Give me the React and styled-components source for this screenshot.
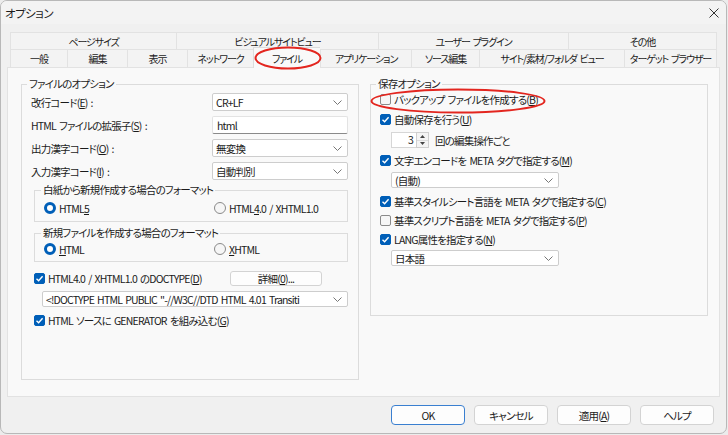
import React from 'react';
import styled, { createGlobalStyle } from 'styled-components';

const GlobalStyle = createGlobalStyle`
  html, body {
    margin: 0;
    padding: 0;
    background: #ececec;
  }
  body {
    font-family: "Noto Sans CJK JP", "Noto Sans", sans-serif;
    font-size: 10.5px;
    letter-spacing: -0.8px;
    word-spacing: 1.5px;
    color: #1b1b1b;
    font-feature-settings: "palt";
  }
  * {
    box-sizing: border-box;
  }
  u {
    text-underline-offset: 1px;
  }
`;

const Window = styled.div`
  position: relative;
  width: 727px;
  height: 434px;
  background: #f0f0f0;
  border: 1px solid #b8b8b8;
  border-radius: 7px;
  display: flex;
  flex-direction: column;
  overflow: hidden;
`;

const TitleBar = styled.div`
  height: 23px;
  display: flex;
  align-items: center;
  justify-content: space-between;
  padding: 0 7px 0 4px;
  font-size: 11.5px;
  letter-spacing: -0.5px;
  background: #f3f3f3;
`;

const Body = styled.div`
  padding: 8px 6px 0 6px;
  display: flex;
  flex-direction: column;
`;

const Tabs = styled.div`
  margin: 0 2px 0 3px;
  display: flex;
  flex-direction: column;
`;

const TabRow = styled.div`
  display: flex;
  height: ${(p) => p.$h}px;
`;

const Tab = styled.div`
  flex: 0 0 ${(p) => p.$w}px;
  display: flex;
  align-items: center;
  justify-content: center;
  border-top: 1px solid #e2e2e2;
  border-left: 1px solid #e2e2e2;
  background: ${(p) => (p.$active ? '#f9f9f9' : '#f3f3f3')};
  white-space: nowrap;
  font-size: 10px;
  letter-spacing: -1.1px;
  position: relative;
  &:last-child {
    border-right: 1px solid #e2e2e2;
  }
  ${(p) =>
    p.$active &&
    `
    margin-top: -2px;
    margin-bottom: -1px;
    border-color: #dcdcdc;
    z-index: 1;
  `}
`;

const Panel = styled.div`
  height: 330px;
  background: #f9f9f9;
  border: 1px solid #e2e2e2;
  display: flex;
  align-items: flex-start;
  gap: 11px;
  padding: 10px 11px 0 13px;
`;

const GroupBox = styled.fieldset`
  margin: 0;
  width: 338px;
  padding: 0 10px ${(p) => p.$pb}px 9px;
  border: 1px solid #dcdcdc;
  display: flex;
  flex-direction: column;
  min-width: 0;
`;

const Legend = styled.legend`
  padding: 0 2px;
  margin-left: -4px;
  line-height: 12px;
`;

const FormGrid = styled.div`
  display: grid;
  grid-template-columns: 1fr 136px;
  grid-auto-rows: 18px;
  row-gap: 5px;
  padding-top: 3px;
  align-items: center;
`;

const FieldLabel = styled.div`
  white-space: nowrap;
`;

const Select = styled.div`
  height: ${(p) => p.$h || 18}px;
  width: ${(p) => (p.$w ? `${p.$w}px` : 'auto')};
  margin-left: ${(p) => p.$ml || 0}px;
  margin-top: ${(p) => p.$mt || 0}px;
  background: #fff;
  border: 1px solid #cdcdcd;
  border-radius: 2px;
  display: flex;
  align-items: center;
  justify-content: space-between;
  padding: 0 5px 0 3px;
  white-space: nowrap;
  overflow: hidden;
  gap: 4px;
  & > svg {
    flex: none;
  }
`;

const TextInput = styled.div`
  height: 18px;
  background: #fff;
  border: 1px solid #e3e3e3;
  border-bottom-color: #8a8a8a;
  border-radius: 2px;
  display: flex;
  align-items: center;
  padding: 0 4px;
`;

const SubGroup = styled.fieldset`
  margin: ${(p) => p.$mt}px 0 0 3px;
  padding: ${(p) => p.$pt}px 8px ${(p) => p.$pb}px 9px;
  border: 1px solid #dcdcdc;
  display: grid;
  grid-template-columns: 170px 1fr;
  min-width: 0;
`;

const SubLegend = styled.legend`
  padding: 0 2px;
  margin-left: -3px;
  line-height: 12px;
`;

const RadioRow = styled.div`
  display: flex;
  align-items: center;
  gap: 3px;
  height: 16px;
`;

const RadioDot = styled.span`
  width: 12px;
  height: 12px;
  border-radius: 50%;
  flex: none;
  ${(p) =>
    p.$on
      ? `
    background: #fff;
    border: 3px solid #005fb8;
  `
      : `
    background: #f6f6f6;
    border: 1px solid #8a8a8a;
  `}
`;

const CheckRow = styled.div`
  display: flex;
  align-items: center;
  gap: 3px;
  height: ${(p) => p.$h || 19}px;
  margin-top: ${(p) => p.$mt || 0}px;
  margin-left: ${(p) => p.$ml || 0}px;
  white-space: nowrap;
`;

const Box = styled.span`
  width: 11px;
  height: 11px;
  border-radius: 2px;
  flex: none;
  display: flex;
  align-items: center;
  justify-content: center;
  background: ${(p) => (p.$on ? '#005fb8' : '#f6f6f6')};
  border: 1px solid ${(p) => (p.$on ? '#005fb8' : '#8a8a8a')};
`;

const DoctypeRow = styled.div`
  display: grid;
  grid-template-columns: 196px 92px;
  align-items: center;
  height: 18px;
  margin: 7px 0 0 3px;
`;

const SmallButton = styled.div`
  height: 15px;
  background: #fdfdfd;
  border: 1px solid #d3d3d3;
  border-radius: 3px;
  display: flex;
  align-items: center;
  justify-content: center;
`;

const SpinRow = styled.div`
  display: flex;
  align-items: center;
  gap: 6px;
  margin: 3px 0 0 11px;
  height: 16px;
`;

const Spin = styled.div`
  display: flex;
  height: 16px;
`;

const SpinValue = styled.div`
  width: 25px;
  background: #fff;
  border: 1px solid #d6d6d6;
  border-right: none;
  text-align: right;
  padding-right: 3px;
  line-height: 14px;
`;

const SpinButtons = styled.div`
  width: 13px;
  display: flex;
  flex-direction: column;
  border: 1px solid #cfcfcf;
  background: #f4f4f4;
  & > span {
    flex: 1;
    display: flex;
    align-items: center;
    justify-content: center;
  }
  & > span + span {
    border-top: 1px solid #dcdcdc;
  }
`;

const Footer = styled.div`
  display: flex;
  justify-content: flex-end;
  gap: 9px;
  padding: 8px 6px 0 0;
`;

const Button = styled.div`
  width: 74px;
  height: 20px;
  background: #fdfdfd;
  border: 1px solid ${(p) => (p.$primary ? '#3a7fd0' : '#d3d3d3')};
  border-radius: 4px;
  display: flex;
  align-items: center;
  justify-content: center;
`;

const Mark = styled.svg`
  position: absolute;
  left: ${(p) => p.$x}px;
  top: ${(p) => p.$y}px;
  pointer-events: none;
  z-index: 5;
`;

const Chevron = () => (
  <svg width="9" height="5" viewBox="0 0 9 5">
    <path d="M0.5 0.5 L4.5 4.5 L8.5 0.5" fill="none" stroke="#777" strokeWidth="1" />
  </svg>
);

const Tick = () => (
  <svg width="9" height="9" viewBox="0 0 9 9">
    <path d="M1.5 4.8 L3.6 6.8 L7.6 2.2" fill="none" stroke="#fff" strokeWidth="1.4" />
  </svg>
);

const Check = ({ on, children, ...rest }) => (
  <CheckRow {...rest}>
    <Box $on={on}>{on && <Tick />}</Box>
    <span>{children}</span>
  </CheckRow>
);

const Radio = ({ on, children }) => (
  <RadioRow>
    <RadioDot $on={on} />
    <span>{children}</span>
  </RadioRow>
);

const topTabs = [
  { label: 'ページサイズ', w: 166 },
  { label: 'ビジュアルサイトビュー', w: 202 },
  { label: 'ユーザー プラグイン', w: 190 },
  { label: 'その他', w: 149 },
];

const bottomTabs = [
  { label: '一般', w: 57 },
  { label: '編集', w: 60 },
  { label: '表示', w: 60 },
  { label: 'ネットワーク', w: 66 },
  { label: 'ファイル', w: 67, active: true },
  { label: 'アプリケーション', w: 91 },
  { label: 'ソース編集', w: 68 },
  { label: 'サイト/素材/フォルダ ビュー', w: 145 },
  { label: 'ターゲット ブラウザー', w: 93 },
];

const App = () => {
  return (
    <>
      <GlobalStyle />
      <Window>
        <TitleBar>
          <span>オプション</span>
          <svg width="10" height="10" viewBox="0 0 10 10">
            <path d="M0.5 0.5 L9.5 9.5 M9.5 0.5 L0.5 9.5" stroke="#333" strokeWidth="1" />
          </svg>
        </TitleBar>
        <Body>
          <Tabs>
            <TabRow $h={17}>
              {topTabs.map((t) => (
                <Tab key={t.label} $w={t.w}>
                  {t.label}
                </Tab>
              ))}
            </TabRow>
            <TabRow $h={18}>
              {bottomTabs.map((t) => (
                <Tab key={t.label} $w={t.w} $active={t.active}>
                  {t.label}
                </Tab>
              ))}
            </TabRow>
          </Tabs>
          <Panel>
            <GroupBox $pb={50}>
              <Legend>ファイルのオプション</Legend>
              <FormGrid>
                <FieldLabel>改行コード(<u>E</u>) :</FieldLabel>
                <Select>
                  <span>CR+LF</span>
                  <Chevron />
                </Select>
                <FieldLabel>HTML ファイルの拡張子(<u>S</u>) :</FieldLabel>
                <TextInput>html</TextInput>
                <FieldLabel>出力漢字コード(<u>O</u>) :</FieldLabel>
                <Select>
                  <span>無変換</span>
                  <Chevron />
                </Select>
                <FieldLabel>入力漢字コード(<u>I</u>) :</FieldLabel>
                <Select>
                  <span>自動判別</span>
                  <Chevron />
                </Select>
              </FormGrid>
              <SubGroup $mt={4} $pt={4} $pb={5}>
                <SubLegend>白紙から新規作成する場合のフォーマット</SubLegend>
                <Radio on>
                  HTML<u>5</u>
                </Radio>
                <Radio>
                  HTML<u>4</u>.0 / XHTML1.0
                </Radio>
              </SubGroup>
              <SubGroup $mt={5} $pt={2} $pb={4}>
                <SubLegend>新規ファイルを作成する場合のフォーマット</SubLegend>
                <Radio on>
                  <u>H</u>TML
                </Radio>
                <Radio>
                  <u>X</u>HTML
                </Radio>
              </SubGroup>
              <DoctypeRow>
                <Check on $h={18}>
                  HTML4.0 / XHTML1.0 のDOCTYPE(<u>D</u>)
                </Check>
                <SmallButton>
                  詳細(<u>0</u>)...
                </SmallButton>
              </DoctypeRow>
              <Select $h={16} $ml={11} $w={306} $mt={4}>
                <span>&lt;!DOCTYPE HTML PUBLIC "-//W3C//DTD HTML 4.01 Transiti</span>
                <Chevron />
              </Select>
              <Check on $h={18} $mt={4} $ml={3}>
                HTML ソースに GENERATOR を組み込む(<u>G</u>)
              </Check>
            </GroupBox>

            <GroupBox $pb={49}>
              <Legend>保存オプション</Legend>
              <Check>
                バックアップ ファイルを作成する(<u>B</u>)
              </Check>
              <Check on $mt={1}>
                自動保存を行う(<u>U</u>)
              </Check>
              <SpinRow>
                <Spin>
                  <SpinValue>3</SpinValue>
                  <SpinButtons>
                    <span>
                      <svg width="5" height="3" viewBox="0 0 5 3">
                        <path d="M0 3 L2.5 0 L5 3 Z" fill="#444" />
                      </svg>
                    </span>
                    <span>
                      <svg width="5" height="3" viewBox="0 0 5 3">
                        <path d="M0 0 L2.5 3 L5 0 Z" fill="#444" />
                      </svg>
                    </span>
                  </SpinButtons>
                </Spin>
                <span>回の編集操作ごと</span>
              </SpinRow>
              <Check on $mt={3}>
                文字エンコードを META タグで指定する(<u>M</u>)
              </Check>
              <Select $h={16} $ml={11} $w={168} $mt={2}>
                <span>(自動)</span>
                <Chevron />
              </Select>
              <Check on $mt={4}>
                基準スタイルシート言語を META タグで指定する(<u>C</u>)
              </Check>
              <Check>
                基準スクリプト言語を META タグで指定する(<u>P</u>)
              </Check>
              <Check on>
                LANG属性を指定する(<u>N</u>)
              </Check>
              <Select $h={16} $ml={11} $w={168} $mt={1}>
                <span>日本語</span>
                <Chevron />
              </Select>
            </GroupBox>
          </Panel>
          <Footer>
            <Button $primary>OK</Button>
            <Button>キャンセル</Button>
            <Button>
              適用(<u>A</u>)
            </Button>
            <Button>ヘルプ</Button>
          </Footer>
        </Body>

        <Mark $x={253} $y={45} width="68" height="24" viewBox="0 0 68 24">
          <ellipse cx="34" cy="12" rx="32.5" ry="10.5" fill="none" stroke="#e3261f" strokeWidth="2" />
        </Mark>
        <Mark $x={369} $y={87} width="178" height="26" viewBox="0 0 178 26">
          <ellipse cx="88" cy="13" rx="86.5" ry="11.5" fill="none" stroke="#e3261f" strokeWidth="2" />
        </Mark>
      </Window>
    </>
  );
};

export default App;
